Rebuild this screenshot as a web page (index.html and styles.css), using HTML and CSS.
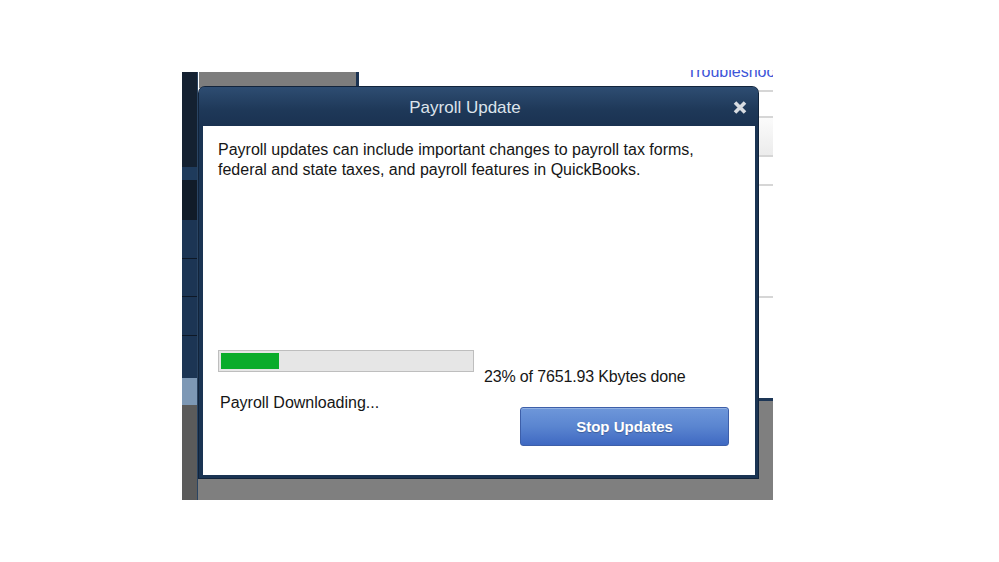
FILE: index.html
```html
<!DOCTYPE html>
<html lang="en">
<head>
<meta charset="utf-8">
<title>Payroll Update</title>
<link rel="stylesheet" href="styles.css">
</head>
<body>
<div class="screen">
  <div class="nav">
    <div class="seg s1"></div>
    <div class="seg s2"></div>
    <div class="seg s3"></div>
    <div class="seg s4"></div>
    <div class="seg s5"></div>
    <div class="seg s6"></div>
    <div class="seg s7"></div>
    <div class="seg s8"></div>
    <div class="seg s9"></div>
  </div>
  <div class="main">
    <div class="toprow">
      <div class="tab"></div>
      <a class="link">Troubleshoot</a>
    </div>
    <div class="mid">
      <div class="list">
        <div class="row r1"></div>
        <div class="row r2"></div>
        <div class="row r3"></div>
        <div class="row r4"></div>
        <div class="row r5"></div>
      </div>
    </div>
    <div class="foot"></div>
  </div>

  <div class="dialog">
    <div class="titlebar">
      <div class="title">Payroll Update</div>
      <div class="close">
        <svg width="14" height="13" viewBox="0 0 14 13"><path d="M2 1.5 L12 11.5 M12 1.5 L2 11.5" stroke="#d8dce1" stroke-width="3.6" stroke-linecap="butt"/></svg>
      </div>
    </div>
    <div class="dbody">
      <p class="msg">Payroll updates can include important changes to payroll tax forms,<br>federal and state taxes, and payroll features in QuickBooks.</p>
      <div class="progress-row">
        <div class="bar"><div class="fill" style="width:23%"></div></div>
        <div class="pct">23% of 7651.93 Kbytes done</div>
      </div>
      <div class="bottom-row">
        <div class="status">Payroll Downloading...</div>
        <button class="btn">Stop Updates</button>
      </div>
    </div>
  </div>
</div>
</body>
</html>
```

FILE: styles.css
```css
html, body {
  margin: 0;
  padding: 0;
  background: #ffffff;
  font-family: "Liberation Sans", Arial, sans-serif;
}

.screen {
  position: relative;
  margin: 70px 0 0 182px;
  width: 591px;
  height: 430px;
  display: flex;
  overflow: hidden;
}

/* left navigation strip */
.nav {
  width: 15px;
  margin-top: 2px;
  border-right: 1px solid #2a4462;
  display: flex;
  flex-direction: column;
}
.seg { flex: none; }
.s1 { height: 95px; background: #142131; }
.s2 { height: 13px; background: #1f3b5c; }
.s3 { height: 40px; background: #111c29; }
.s4 { height: 38px; background: #1c3554; border-bottom: 1px solid #0e1826; }
.s5 { height: 37px; background: #1c3554; border-bottom: 1px solid #0e1826; }
.s6 { height: 38px; background: #1c3554; border-bottom: 1px solid #0e1826; }
.s7 { height: 42px; background: #1c3554; }
.s8 { height: 27px; background: #7d98b5; }
.s9 { height: 95px; background: #5b5b5b; }

/* main background window */
.main {
  flex: 1;
  display: flex;
  flex-direction: column;
  min-width: 0;
}
.toprow {
  height: 18px;
  display: flex;
  flex: none;
  overflow: hidden;
}
.tab {
  flex: none;
  width: 157px;
  height: 16px;
  margin: 2px 0 0 1px;
  background: #7d7d7d;
  border-right: 3px solid #1b3352;
}
.link {
  flex: none;
  margin-left: 328px;
  margin-top: -6px;
  font-size: 16px;
  line-height: 16px;
  color: #3d55d8;
  white-space: nowrap;
}
.mid {
  flex: 1;
  display: flex;
  justify-content: flex-end;
  background: #ffffff;
}
.list {
  width: 80px;
  display: flex;
  flex-direction: column;
}
.row { flex: none; border-bottom: 2px solid #d6d6d6; }
.r1 { height: 2px; }
.r2 { height: 24px; }
.r3 { height: 37px; background: linear-gradient(#fbfbfb, #ececec); }
.r4 { height: 27px; }
.r5 { height: 110px; }
.foot {
  flex: none;
  height: 99px;
  background: #7f7f7f;
  border-top: 3px solid #1d3656;
}

/* dialog */
.dialog {
  position: absolute;
  left: 17px;
  top: 17px;
  width: 559px;
  height: 391px;
  box-sizing: border-box;
  padding: 0 3px 3px 4px;
  background: #1a3453;
  border-radius: 6px 6px 0 0;
  display: flex;
  flex-direction: column;
  box-shadow: 0 0 0 1px #12243b;
}
.titlebar {
  flex: none;
  height: 39px;
  display: flex;
  align-items: center;
  background: linear-gradient(#2e4d72, #1e3858 60%, #1a3251);
  border-radius: 5px 5px 0 0;
  margin: 0 -3px 0 -4px;
  padding: 0 3px 0 4px;
}
.title {
  flex: 1;
  text-align: center;
  font-size: 17px;
  color: #dde4ec;
  padding-top: 2px;
}
.close {
  width: 26px;
  display: flex;
  justify-content: center;
  padding-top: 1px;
  margin-right: 2px;
}
.close svg { display: block; }

.dbody {
  flex: 1;
  background: #ffffff;
  padding: 14px 15px 0 15px;
  display: flex;
  flex-direction: column;
}
.msg {
  margin: 0;
  font-size: 16px;
  line-height: 20px;
  color: #161616;
}
.progress-row {
  display: flex;
  align-items: flex-start;
  margin-top: 170px;
}
.bar {
  flex: none;
  width: 256px;
  height: 22px;
  box-sizing: border-box;
  padding: 2px;
  border: 1px solid #bebebe;
  background: #e6e6e6;
}
.fill {
  height: 16px;
  background: #0aac2b;
}
.pct {
  margin: 17px 0 0 10px;
  font-size: 16px;
  line-height: 20px;
  color: #161616;
  white-space: nowrap;
  letter-spacing: -0.15px;
}
.bottom-row {
  display: flex;
  justify-content: space-between;
  align-items: flex-start;
  margin-top: 6px;
}
.status {
  padding-left: 2px;
  font-size: 16px;
  line-height: 20px;
  color: #161616;
}
.btn {
  width: 209px;
  height: 39px;
  margin: 14px 11px 0 0;
  box-sizing: border-box;
  border: 1px solid #3d5fa9;
  border-radius: 3px;
  background: linear-gradient(#6e97da, #5a85d0 50%, #3f69c2);
  color: #ffffff;
  font-family: "Liberation Sans", Arial, sans-serif;
  font-weight: bold;
  font-size: 15px;
  text-shadow: 0 1px 1px rgba(0, 0, 0, 0.25);
  box-shadow: inset 0 1px 0 rgba(255, 255, 255, 0.25);
  padding: 0;
}
```
